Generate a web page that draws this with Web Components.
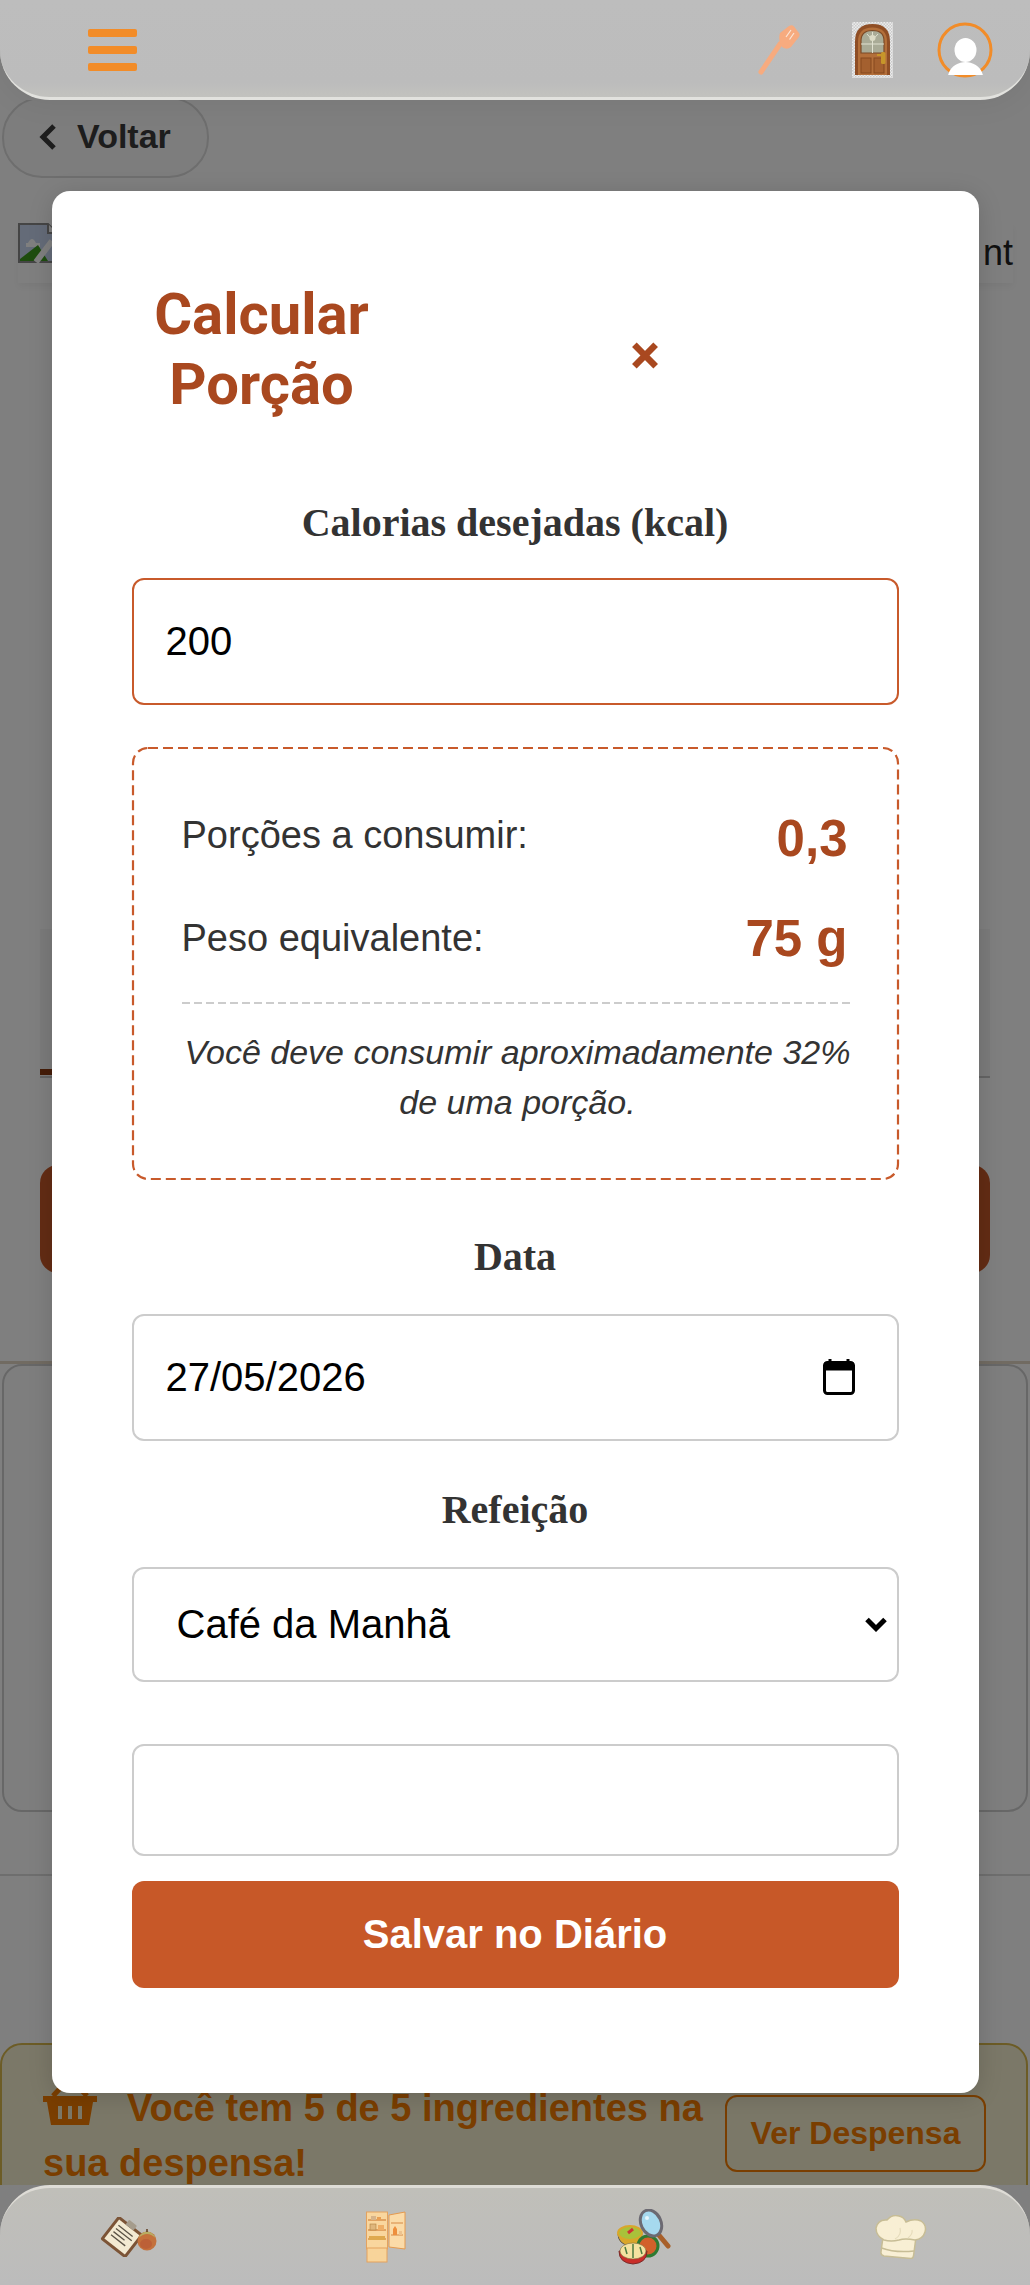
<!DOCTYPE html>
<html lang="pt-BR">
<head>
<meta charset="utf-8">
<title>Calcular Porção</title>
<style>
html,body{margin:0;padding:0;background:#fff}
body{font-family:"Liberation Sans",Arial,sans-serif;width:1030px;height:2285px;overflow:hidden}
</style>
</head>
<body>
<app-page>
  <app-header slot="header"></app-header>
  <back-button>Voltar</back-button>
  <image-row>Ingredie<span style="margin-left:6px">nt</span></image-row>
  <tab-strip></tab-strip>
  <action-bar></action-bar>
  <info-card></info-card>
  <pantry-banner>
    <span slot="text">Você tem 5 de 5 ingredientes na sua despensa!</span>
    <span slot="action">Ver Despensa</span>
  </pantry-banner>
  <bottom-nav slot="nav"></bottom-nav>
  <portion-modal slot="overlay">
    <modal-title>Calcular Porção</modal-title>
    <field-label style="margin-top:81px">Calorias desejadas (kcal)</field-label>
    <form-box focused style="margin-top:32px;height:127px">200</form-box>
    <result-box style="margin-top:42px">
      <result-row label="Porções a consumir:" value="0,3" style="--lift:6px"></result-row>
      <result-row label="Peso equivalente:" value="75 g" style="margin-top:42px;--lift:0px"></result-row>
      <span slot="note">Você deve consumir aproximadamente 32% de uma porção.</span>
    </result-box>
    <field-label style="margin-top:54px">Data</field-label>
    <form-box style="margin-top:34px;height:127px" kind="date">27/05/2026</form-box>
    <field-label style="margin-top:46px">Refeição</field-label>
    <form-box style="margin-top:34px;height:115px" kind="select">Café da Manhã</form-box>
    <form-box style="margin-top:62px;height:112px"></form-box>
    <primary-button style="margin-top:25px">Salvar no Diário</primary-button>
  </portion-modal>
</app-page>

<script>
function make(name, html, setup){
  customElements.define(name, class extends HTMLElement{
    constructor(){super();const r=this.attachShadow({mode:"open"});
      r.innerHTML = typeof html==="function"?html(this):html;}
    connectedCallback(){ if(setup) setup(this); }
  });
}

make("app-page",`<style>
:host{display:block;position:relative;width:1030px;height:2285px;overflow:hidden}
.wrap{display:flex;flex-direction:column;height:100%}
.bar{position:relative;z-index:3;flex:none}
main{flex:1;min-height:0;overflow:hidden;display:flex;flex-direction:column}
.overlay{position:absolute;inset:0;z-index:2;background:rgba(0,0,0,.5);display:flex;align-items:center;justify-content:center;padding-bottom:2px;box-sizing:border-box}
</style>
<div class="wrap">
  <div class="bar"><slot name="header"></slot></div>
  <main><slot></slot></main>
  <div class="bar"><slot name="nav"></slot></div>
</div>
<div class="overlay"><slot name="overlay"></slot></div>`);

make("app-header",`<style>
:host{display:block}
header{box-sizing:border-box;height:100px;border-bottom:3px solid #e2e2de;border-radius:0 0 50px 50px;
  background:linear-gradient(#bdbdbd,#bcbcbc 85%,#c2c2be);display:flex;align-items:center;padding:3px 37px 0 88px;box-shadow:0 4px 30px rgba(0,0,0,.06)}
.burger{display:flex;flex-direction:column;gap:9px;width:49px;margin-right:auto}
.burger i{display:block;height:8px;background:#f28c28;border-radius:2px}
.spat{width:46px;height:54px;display:block;margin-right:50px}
.door{width:41px;height:56px;display:block;margin-right:44px}
.av{width:56px;height:56px;display:block}
</style>
<header>
<div class="burger"><i></i><i></i><i></i></div>
<svg class="spat" viewBox="0 0 46 54"><path d="M5 49L24 21" stroke="#f7ab7f" stroke-width="5" stroke-linecap="round"/>
<path d="M24 10L33 3Q36 1.500 38 3.500L43 10Q44.500 12 42.500 14.500L35 24Q31 27.500 26 24L24 20Q22.500 14 24 10Z" fill="#f7ab7f"/>
<path d="M30 14L35 7M33.500 16.500L38 10" stroke="#fbe6d8" stroke-width="1.200"/></svg>
<svg class="door" viewBox="0 0 41 56"><defs><pattern id="ck" width="3" height="3" patternUnits="userSpaceOnUse"><rect width="3" height="3" fill="#ececec"/><rect width="1.500" height="1.500" fill="#cbcbcb"/><rect x="1.500" y="1.500" width="1.500" height="1.500" fill="#cbcbcb"/></pattern></defs>
<rect width="41" height="56" fill="url(#ck)"/>
<path d="M3 53V19.500Q3 2 20.500 2T38 19.500V53Z" fill="#8f4e25"/>
<path d="M6 53V20Q6 5.500 20.500 5.500T35 20V53Z" fill="#b36f3a"/>
<path d="M9 31V19Q9 8.500 20.500 8.500T32 19V31Z" fill="#a9ab96" stroke="#7c4a26" stroke-width="1.200"/>
<path d="M20.500 10V31M9 22H32M15 12L20.500 18L26 12" stroke="#e0e1d0" stroke-width="1" fill="none"/>
<circle cx="20.500" cy="16" r="3" fill="#dcdcc6"/>
<rect x="9" y="36" width="10" height="15" fill="#a4602f" stroke="#85491f"/>
<rect x="22" y="36" width="10" height="15" fill="#a4602f" stroke="#85491f"/>
<path d="M25 33H31" stroke="#c7962a" stroke-width="2"/><rect x="29" y="30" width="4.500" height="12" rx="1.500" fill="#c7962a"/>
</svg>
<svg class="av" viewBox="0 0 56 56"><defs><clipPath id="c"><rect x="0" y="0" width="56" height="53"/></clipPath></defs>
<circle cx="28" cy="28" r="26" fill="none" stroke="#f28c28" stroke-width="3"/>
<g fill="#fff" clip-path="url(#c)"><ellipse cx="28.500" cy="28" rx="11" ry="12"/><path d="M11 53.500C13 44 22 40 28.500 40S44 44 46 53.500Z"/></g></svg>
</header>`);

make("back-button",`<style>
:host{display:flex;align-items:center;box-sizing:border-box;width:207px;height:81px;margin:-3px 0 0 2px;flex:none;
 border:2px solid #dcdcdc;border-radius:40px;background:#fafafa;color:#3a3a3a;font:700 34px "Liberation Sans",sans-serif;padding:0 0 2px 34px;gap:19px}
svg{width:20px;height:28px;display:block}
</style><svg viewBox="0 0 20 28"><path d="M16 3L5 14L16 25" fill="none" stroke="#3a3a3a" stroke-width="5"/></svg><slot></slot>`);

make("image-row",`<style>
:host{display:flex;justify-content:space-between;align-items:flex-start;box-sizing:border-box;flex:none;height:60px;margin:45px 17px 0 18px;
 color:#222;font:36px/1 "Liberation Sans",sans-serif;box-shadow:0 4px 8px rgba(0,0,0,.05);padding-top:12px}
svg{width:40px;height:40px;margin-top:-12px;display:block}
</style><svg viewBox="0 0 40 40"><path d="M1 1H30L39 10V39H1Z" fill="#c8d6f0" stroke="#8a8a8a" stroke-width="2"/><path d="M30 1V10H39" fill="#fff" stroke="#8a8a8a" stroke-width="2"/><path d="M10 20Q14 12 18 20H22V24H8V20Z" fill="#fff"/><path d="M2 38V36L20 22L30 38Z" fill="#3d9a1e"/><path d="M18 39L34 18" stroke="#fff" stroke-width="6"/></svg><span><slot></slot></span>`);

make("tab-strip",`<style>
:host{display:flex;align-items:flex-end;box-sizing:border-box;flex:none;height:149px;margin:646px 40px 0 40px;background:#f6f6f6;border-bottom:2px solid #c8c8c8}
i{display:block;width:120px;height:6px;background:#8b3a12;margin-bottom:1px}
</style><i></i>`);

make("action-bar",`<style>
:host{display:block;flex:none;height:108px;margin:87px 40px 0;background:#c75828;border-radius:18px}
</style>`);

make("info-card",`<style>
:host{display:block;flex:none;border-top:3px solid #e2d6c4;margin-top:88px}
.card{box-sizing:border-box;height:448px;margin:0 2px 0 2px;border:2px solid #cfcfcf;border-radius:20px;background:#fcfcfc}
.sep{height:2px;background:#dcdcdc;margin-top:62px}
</style><div class="card"></div><div class="sep"></div>`);

make("pantry-banner",`<style>
:host{display:flex;align-items:center;box-sizing:border-box;flex:none;width:1028px;margin:167px 0 0 0;padding:36px 40px 36px 41px;
 background:#f6f0d0;border:2px solid #d8b84c;border-radius:22px;color:#f57c00;font:700 38px/55px "Liberation Sans",sans-serif;gap:15px}
.t{flex:1}
svg{width:54px;height:44px;vertical-align:-6px;margin-right:30px}
.a{flex:none;box-sizing:border-box;width:261px;height:77px;margin-bottom:6px;border:2px solid #f57c00;border-radius:12px;display:flex;align-items:center;justify-content:center;font:700 32px "Liberation Sans",sans-serif}
</style><div class="t"><svg viewBox="0 0 54 44"><path d="M0 13H54V19H50L46 42H8L4 19H0Z" fill="#f57c00"/><path d="M10 13L22 0M44 13L32 0" stroke="#f57c00" stroke-width="5"/><path d="M17 23V36M27 23V36M37 23V36" stroke="#f6f0d0" stroke-width="4"/></svg><slot name="text"></slot></div><div class="a"><slot name="action"></slot></div>`);

make("bottom-nav",`<style>
:host{display:block}
nav{box-sizing:border-box;height:100px;border-top:3px solid #dedcd6;border-radius:50px 50px 0 0;background:linear-gradient(#c0bfb9,#bcbcbc);display:grid;grid-template-columns:repeat(4,1fr);place-items:center}
svg{display:block}
</style><nav>
<svg width="58" height="40" viewBox="0 0 58 40"><g transform="rotate(38 22 20)"><rect x="6" y="5" width="32" height="30" rx="2" fill="#7c5436"/><rect x="9" y="8" width="26" height="24" fill="#f3ead2"/><rect x="17" y="2" width="10" height="6" rx="1" fill="#a59c8c"/><path d="M12 13H30M12 17H32M12 21H26M12 25H30" stroke="#5b5346" stroke-width="1.300"/></g><circle cx="47" cy="24" r="9.500" fill="#c4713c"/><path d="M38.500 21Q47 13 55.500 21Q53 15 47 14.500Q41 15 38.500 21Z" fill="#b8ad62"/><path d="M47 15V12" stroke="#5b3a1f" stroke-width="1.500"/><ellipse cx="46" cy="27" rx="6" ry="5" fill="#b95a34" opacity=".7"/></svg>
<svg width="40" height="52" viewBox="0 0 40 52"><rect x="0.500" y="1" width="21" height="37" fill="#f9d69e" stroke="#e3a25f"/><rect x="1" y="37" width="20" height="14" fill="#f8d49a" stroke="#e3a25f"/><path d="M2 9H20M2 19H20M2 28H20" stroke="#d99350" stroke-width="1.500"/><rect x="3" y="25" width="16" height="4" fill="#dfa94f"/><rect x="5" y="5" width="5" height="4" fill="#d7b48a"/><rect x="11" y="6" width="4" height="3" fill="#ea9f52"/><rect x="4" y="13" width="6" height="6" fill="#dfb67c" stroke="#b08040" stroke-width=".6"/><rect x="12" y="14" width="6" height="5" fill="#efae66"/><path d="M23 4L39 1V38L23 36Z" fill="#fbdba8" stroke="#e59a4f"/><path d="M25 12H37M25 24H37" stroke="#e2a565" stroke-width="1.500"/><path d="M27 24V18L29 15L31 18V24Z" fill="#ee8f3d"/><path d="M33 24V20H36V24Z" fill="#eec38f"/></svg>
<svg width="54" height="56" viewBox="0 0 54 56"><path d="M1 25H25Q25 35 13 37Q1 35 1 25Z" fill="#d9a62a" stroke="#5d5a55"/><ellipse cx="13" cy="24" rx="12" ry="7" fill="#a9c13a" stroke="#d9a62a" stroke-width="2"/><path d="M11 24L16 20" stroke="#c33" stroke-width="3"/><circle cx="31" cy="37" r="10" fill="#d2602a" stroke="#2f7a31" stroke-width="3"/><path d="M2 42H30Q30 54 16 55Q2 54 2 42Z" fill="#c92e2a" stroke="#7c2a28"/><ellipse cx="16" cy="42" rx="13" ry="8" fill="#f4e2a0" stroke="#7c6a3a" stroke-width=".6"/><path d="M16 35V49M8 38L10 45M23 38L25 45" stroke="#4b7a3f" stroke-width="1.500"/><path d="M41 25L51 37" stroke="#a8602a" stroke-width="5" stroke-linecap="round"/><ellipse cx="34" cy="14" rx="10" ry="13.500" transform="rotate(-25 34 14)" fill="#a6d9ee" stroke="#6c6a72" stroke-width="3"/><circle cx="30" cy="9" r="2" fill="#e6f6fc"/></svg>
<svg width="52" height="44" viewBox="0 0 52 44"><path d="M8 22L6 37Q5.500 40 9 41L36 43.500Q38 43.500 38.500 41L41 22Z" fill="#f8efd4" stroke="#c7bd95" stroke-width="1.500"/><path d="M6.500 33Q20 38 39 36" fill="none" stroke="#c7bd95" stroke-width="1.500"/><path d="M9 25Q1 21 1 13Q3 4 12 5Q17 -1 24 1Q29 2 31 7Q39 3 46 6Q52 10 50 17Q48 24 40 25Q30 23 24 25Q16 27 9 25Z" fill="#f8efd4" stroke="#c7bd95" stroke-width="1.500"/><path d="M20 24Q27 20 25 13M33 23Q38 19 37 15" fill="none" stroke="#e6dcbc" stroke-width="1.200"/></svg>
</nav>`);

make("portion-modal",`<style>
:host{display:block;box-sizing:border-box;width:927px;background:#fff;border-radius:18px;padding:88px 80px 105px 80px;box-shadow:0 4px 24px rgba(0,0,0,.15)}
</style><slot></slot>`);

make("modal-title",`<style>
:host{display:grid;grid-template-columns:260px 1fr;align-items:center;color:#a9481f}
h2{margin:0;text-align:center;font:700 58px/70px Roboto,"Liberation Sans",sans-serif}
span{justify-self:center;font:700 56px/1 Roboto,"Liberation Sans",sans-serif;padding-top:13px}
</style><h2><slot></slot></h2><span>×</span>`);

make("field-label",`<style>
:host{display:block;text-align:center;color:#333;font:700 40px/46px "Liberation Serif",serif}
</style><slot></slot>`);

make("form-box",(el)=>{
  const k=el.getAttribute("kind");
  const f=el.hasAttribute("focused");
  const cal=`<svg width="32" height="36" viewBox="0 0 32 36"><path d="M7 0V4M25 0V4" stroke="#000" stroke-width="3"/><rect x="1.500" y="3.500" width="29" height="31" rx="3" fill="none" stroke="#000" stroke-width="3"/><rect x="1.500" y="3.500" width="29" height="8" fill="#000"/></svg>`;
  const chev=`<svg width="24" height="15" viewBox="0 0 24 15"><path d="M3 2.500L12 11.500L21 2.500" fill="none" stroke="#000" stroke-width="5"/></svg>`;
  return `<style>
  :host{display:flex;align-items:center;justify-content:space-between;box-sizing:border-box;border:2px solid ${f?"#c85a2b":"#cccccc"};border-radius:12px;
   padding:0 ${k==="date"?"42px":k==="select"?"9px":"32px"} 0 ${k==="select"?"43px":"32px"};color:#000;font:40px "Liberation Sans",sans-serif;background:#fff}
  svg{display:block}
  </style><slot></slot>${k==="date"?cal:k==="select"?chev:""}`;
});

make("result-box",`<style>
:host{display:block;position:relative;box-sizing:border-box;border:2px solid transparent;padding:61px 49px 51px 48px;color:#333}
.frame{position:absolute;left:-2px;top:-2px;width:calc(100% + 4px);height:calc(100% + 4px);pointer-events:none;overflow:visible}
.frame rect{x:1px;y:1px;width:calc(100% - 2px);height:calc(100% - 2px);fill:none;stroke:#c85a2b;stroke-width:2.200;stroke-dasharray:10 5}
hr{border:0;height:2px;background:repeating-linear-gradient(90deg,#ccc 0 8px,transparent 8px 12px);margin:34px -2px 23px 0}
p{margin:0 -6px 0 0;text-align:center;font:italic 34px/50px "Liberation Sans",sans-serif}
</style><svg class="frame"><rect rx="15" ry="15"></rect></svg><slot></slot><hr><p><slot name="note"></slot></p>`);

make("result-row",(el)=>`<style>
:host{display:flex;justify-content:space-between;align-items:center}
span{font:38px/43px "Liberation Sans",sans-serif;padding-bottom:var(--lift,0px)}
b{font:700 51px/58px "Liberation Sans",sans-serif;color:#a9481f}
</style><span>${el.getAttribute("label")}</span><b>${el.getAttribute("value")}</b>`);

make("primary-button",`<style>
:host{display:flex;align-items:center;justify-content:center;box-sizing:border-box;height:107px;background:#c75828;border-radius:12px;color:#fff;font:700 40px "Liberation Sans",sans-serif}
</style><slot></slot>`);
</script>
</body>
</html>
